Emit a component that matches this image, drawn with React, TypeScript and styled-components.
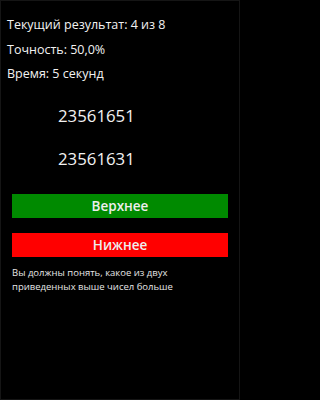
import styled, { createGlobalStyle } from "styled-components";

const GlobalStyle = createGlobalStyle`
  html, body {
    margin: 0;
    padding: 0;
    background: #000;
  }
  body {
    font-family: "Open Sans", "Noto Sans", sans-serif;
    color: #f2f2f2;
  }
`;

const Screen = styled.div`
  box-sizing: border-box;
  width: 240px;
  height: 400px;
  background: #000;
  border: 1px solid #151515;
  display: flex;
  flex-direction: column;
`;

const Stats = styled.div`
  padding: 12px 0 0 6px;
  display: flex;
  flex-direction: column;
`;

const StatLine = styled.div`
  font-size: 12.5px;
  line-height: 24.5px;
  white-space: nowrap;
`;

const Numbers = styled.div`
  margin-top: 7px;
  padding-left: 57px;
  display: flex;
  flex-direction: column;
`;

const NumberLine = styled.div`
  font-size: 16.8px;
  line-height: 43px;
`;

const Buttons = styled.div`
  margin-top: 14px;
  padding: 0 11px;
  display: flex;
  flex-direction: column;
  gap: 15px;
`;

const Choice = styled.button<{ $color: string }>`
  height: 24px;
  border: none;
  padding: 0;
  background: ${(p) => p.$color};
  color: #eeeeee;
  font-family: "Open Sans", "Noto Sans", sans-serif;
  font-size: 13.5px;
  font-weight: 600;
  cursor: pointer;
`;

const Hint = styled.p`
  margin: 9px 0 0 11px;
  font-size: 9.5px;
  line-height: 14px;
  color: #e6e6e6;
`;

export default function App() {
  return (
    <>
      <GlobalStyle />
      <Screen>
        <Stats>
          <StatLine>Текущий результат: 4 из 8</StatLine>
          <StatLine>Точность: 50,0%</StatLine>
          <StatLine>Время: 5 секунд</StatLine>
        </Stats>
        <Numbers>
          <NumberLine>23561651</NumberLine>
          <NumberLine>23561631</NumberLine>
        </Numbers>
        <Buttons>
          <Choice $color="#008a00">Верхнее</Choice>
          <Choice $color="#ff0000">Нижнее</Choice>
        </Buttons>
        <Hint>
          Вы должны понять, какое из двух
          <br />
          приведенных выше чисел больше
        </Hint>
      </Screen>
    </>
  );
}
